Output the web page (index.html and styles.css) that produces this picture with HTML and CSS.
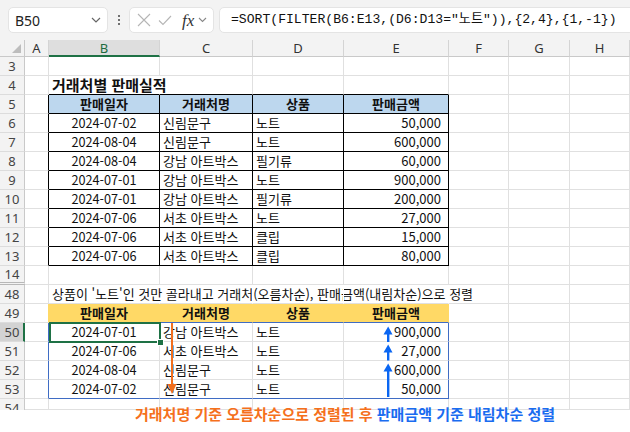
FILE: index.html
```html
<!DOCTYPE html>
<html lang="ko">
<head>
<meta charset="utf-8">
<link rel="stylesheet" href="styles.css">
</head>
<body>
<div class="toolbar">
  <div class="namebox"><span class="ref">B50</span>
    <svg class="chev" width="10" height="6" viewBox="0 0 10 6"><path d="M1 1 L5 5 L9 1" fill="none" stroke="#666" stroke-width="1.2"/></svg>
  </div>
  <div class="dots"><i></i><i></i><i></i></div>
  <div class="fxbox">
    <svg width="14" height="14" viewBox="0 0 14 14"><path d="M1 1 L13 13 M13 1 L1 13" stroke="#b5b5b5" stroke-width="1.1" fill="none"/></svg>
    <svg width="14" height="14" viewBox="0 0 14 14"><path d="M1 7.5 L5 11.5 L13 3" stroke="#b5b5b5" stroke-width="1.1" fill="none"/></svg>
    <span class="fx">fx</span>
    <svg width="9" height="6" viewBox="0 0 9 6"><path d="M1 1 L4.5 4.5 L8 1" fill="none" stroke="#888" stroke-width="1.1"/></svg>
  </div>
  <div class="formula">=SORT(FILTER(B6:E13,(D6:D13="노트")),{2,4},{1,-1})</div>
</div>

<div class="sheet">
  <div class="corner"><svg width="9" height="9" viewBox="0 0 9 9"><path d="M9 0 L9 9 L0 9 Z" fill="#bdbdbd"/></svg></div>
  <div class="h">A</div><div class="h hsel">B</div><div class="h">C</div><div class="h">D</div><div class="h">E</div><div class="h">F</div><div class="h">G</div><div class="h">H</div>

  <div class="rh">3</div><div class="c"></div><div class="c"></div><div class="c"></div><div class="c"></div><div class="c"></div><div class="c"></div><div class="c"></div><div class="c"></div>

  <div class="rh">4</div><div class="c"></div><div class="c nr tb title">거래처별 판매실적</div><div class="c tb"></div><div class="c tb"></div><div class="c tb"></div><div class="c"></div><div class="c"></div><div class="c"></div>

  <div class="rh">5</div><div class="c lb"></div><div class="c t hd">판매일자</div><div class="c t hd">거래처명</div><div class="c t hd">상품</div><div class="c t hd">판매금액</div><div class="c"></div><div class="c"></div><div class="c"></div>

  <div class="rh">6</div><div class="c lb"></div><div class="c t dt">2024-07-02</div><div class="c t kr">신림문구</div><div class="c t kr">노트</div><div class="c t num">50,000</div><div class="c"></div><div class="c"></div><div class="c"></div>
  <div class="rh">7</div><div class="c lb"></div><div class="c t dt">2024-08-04</div><div class="c t kr">신림문구</div><div class="c t kr">노트</div><div class="c t num">600,000</div><div class="c"></div><div class="c"></div><div class="c"></div>
  <div class="rh">8</div><div class="c lb"></div><div class="c t dt">2024-08-04</div><div class="c t kr">강남 아트박스</div><div class="c t kr">필기류</div><div class="c t num">60,000</div><div class="c"></div><div class="c"></div><div class="c"></div>
  <div class="rh">9</div><div class="c lb"></div><div class="c t dt">2024-07-01</div><div class="c t kr">강남 아트박스</div><div class="c t kr">노트</div><div class="c t num">900,000</div><div class="c"></div><div class="c"></div><div class="c"></div>
  <div class="rh">10</div><div class="c lb"></div><div class="c t dt">2024-07-01</div><div class="c t kr">강남 아트박스</div><div class="c t kr">필기류</div><div class="c t num">200,000</div><div class="c"></div><div class="c"></div><div class="c"></div>
  <div class="rh">11</div><div class="c lb"></div><div class="c t dt">2024-07-06</div><div class="c t kr">서초 아트박스</div><div class="c t kr">노트</div><div class="c t num">27,000</div><div class="c"></div><div class="c"></div><div class="c"></div>
  <div class="rh">12</div><div class="c lb"></div><div class="c t dt">2024-07-06</div><div class="c t kr">서초 아트박스</div><div class="c t kr">클립</div><div class="c t num">15,000</div><div class="c"></div><div class="c"></div><div class="c"></div>
  <div class="rh">13</div><div class="c lb"></div><div class="c t dt">2024-07-06</div><div class="c t kr">서초 아트박스</div><div class="c t kr">클립</div><div class="c t num">80,000</div><div class="c"></div><div class="c"></div><div class="c"></div>

  <div class="rh hidden-after">14</div><div class="c"></div><div class="c"></div><div class="c"></div><div class="c"></div><div class="c"></div><div class="c"></div><div class="c"></div><div class="c"></div>

  <div class="rh">48</div><div class="c"></div><div class="c nr note">상품이 '노트'인 것만 골라내고 거래처(오름차순), 판매금액(내림차순)으로 정렬</div><div class="c nr"></div><div class="c nr"></div><div class="c nr"></div><div class="c"></div><div class="c"></div><div class="c"></div>

  <div class="rh">49</div><div class="c ylb"></div><div class="c yl">판매일자</div><div class="c yl">거래처명</div><div class="c yl">상품</div><div class="c yl">판매금액</div><div class="c"></div><div class="c"></div><div class="c"></div>

  <div class="rh rsel">50</div><div class="c sl"></div><div class="c dt">2024-07-01</div><div class="c kr">강남 아트박스</div><div class="c kr">노트</div><div class="c sr num">900,000</div><div class="c"></div><div class="c"></div><div class="c"></div>
  <div class="rh">51</div><div class="c sl"></div><div class="c dt">2024-07-06</div><div class="c kr">서초 아트박스</div><div class="c kr">노트</div><div class="c sr num">27,000</div><div class="c"></div><div class="c"></div><div class="c"></div>
  <div class="rh">52</div><div class="c sl"></div><div class="c dt">2024-08-04</div><div class="c kr">신림문구</div><div class="c kr">노트</div><div class="c sr num">600,000</div><div class="c"></div><div class="c"></div><div class="c"></div>
  <div class="rh">53</div><div class="c sl"></div><div class="c sb dt">2024-07-02</div><div class="c sb kr">신림문구</div><div class="c sb kr">노트</div><div class="c sb sr num">50,000</div><div class="c"></div><div class="c"></div><div class="c"></div>

  <div class="rh last">54</div><div class="c"></div><div class="c"></div><div class="c"></div><div class="c"></div><div class="c"></div><div class="c"></div><div class="c"></div><div class="c"></div>

  <div class="selbox"></div>
  <div class="handle"></div>
  <svg class="arrows" width="630" height="370" viewBox="0 0 630 370">
    <rect x="171" y="283" width="2" height="63" fill="#f26f1e"/>
    <path d="M167.5 344 L176.5 344 L172 354 Z" fill="#f26f1e"/>
    <rect x="387" y="292" width="2.4" height="10" fill="#0a66f2"/>
    <path d="M383.5 294.5 L392.5 294.5 L388.2 286.5 Z" fill="#0a66f2"/>
    <rect x="387" y="310" width="2.4" height="10.5" fill="#0a66f2"/>
    <path d="M383.5 312.5 L392.5 312.5 L388.2 304.5 Z" fill="#0a66f2"/>
    <rect x="387" y="329" width="2.4" height="28" fill="#0a66f2"/>
    <path d="M383.5 331.5 L392.5 331.5 L388.2 323.5 Z" fill="#0a66f2"/>
  </svg>
</div>

<div class="annot"><span class="or">거래처명 기준 오름차순으로 정렬된 후</span> <span class="bl">판매금액 기준 내림차순 정렬</span></div>
</body>
</html>
```

FILE: styles.css
```css
* { box-sizing: border-box; margin: 0; padding: 0; }
html, body { width: 630px; height: 432px; overflow: hidden; background: #fff; }
body { font-family: "Noto Sans CJK KR", "Noto Sans", sans-serif; color: #111; }

.toolbar {
  height: 40px;
  background: #f3f3f3;
  display: flex;
  align-items: center;
  padding-left: 8px;
}
.toolbar > * { flex: none; }
.namebox {
  width: 100px; height: 26px;
  background: #fff;
  border: 1px solid #e4e4e4;
  border-radius: 5px;
  display: flex; align-items: center; justify-content: space-between;
  padding: 0 6px 0 6px;
}
.ref { font-family: "Noto Sans", sans-serif; font-size: 14px; color: #222; }
.dots { width: 21px; display: flex; flex-direction: column; align-items: center; gap: 2px; }
.dots i { display: block; width: 2px; height: 2px; background: #444; border-radius: 1px; }
.fxbox {
  width: 85px; height: 26px;
  background: #fff;
  border: 1px solid #e4e4e4;
  border-radius: 5px;
  display: flex; align-items: center;
  padding-left: 7px; gap: 7px;
}
.fx { font-family: "Liberation Serif", serif; font-style: italic; font-size: 17px; color: #333; margin-left: 3px; margin-right: -3px; line-height: 1; }
.formula {
  margin-left: 5px;
  width: 430px;
  height: 26px;
  background: #fff;
  border: 1px solid #e4e4e4;
  border-radius: 5px;
  padding-left: 11px;
  font-family: "Liberation Mono", "Noto Sans CJK KR", monospace;
  font-size: 13.1px;
  line-height: 24px;
  color: #111;
  white-space: nowrap;
  overflow: hidden;
}

.sheet {
  position: relative;
  display: grid;
  grid-template-columns: 25px 24px 111px 93px 91px 105px 60px 61px 60px;
  grid-template-rows: 17px repeat(18, 19px) 11px;
  height: 370px;
  overflow: hidden;
}
.corner {
  background: #f3f3f3;
  border-right: 1px solid #c9c9c9;
  border-bottom: 1px solid #c9c9c9;
  display: flex; align-items: flex-end; justify-content: flex-end;
  padding: 0 3px 3px 0;
}
.h {
  background: #f3f3f3;
  border-right: 1px solid #d4d4d4;
  border-bottom: 1px solid #c9c9c9;
  font-family: "Noto Sans", sans-serif;
  font-size: 13px; line-height: 16px;
  text-align: center; color: #333;
}
.h.hsel { background: #dedede; border-bottom: 2px solid #1e7145; color: #1e6b3f; }
.rh {
  background: #f3f3f3;
  border-right: 1px solid #c9c9c9;
  border-bottom: 1px solid #dcdcdc;
  font-family: "Noto Sans", sans-serif;
  font-size: 13px; line-height: 18px;
  text-align: center; color: #444;
}
.rh.hidden-after { border-bottom: 3px double #b8b8b8; line-height: 17px; }
.rh.rsel { background: #d3d3d3; border-right: 2px solid #1e7145; padding-left: 1px; }
.rh.last { overflow: hidden; border-bottom: none; }

.c {
  border-right: 1px solid #e0e0e0;
  border-bottom: 1px solid #e0e0e0;
  white-space: nowrap;
  line-height: 17px;
  font-size: 13px;
}
.c.nr { border-right-color: #fff; }
.c.tb { border-bottom-color: #000; }
.c.lb { border-right-color: #000; }
.c.t { border-right-color: #000; border-bottom-color: #000; }
.title { font-size: 15px; font-weight: 700; padding-left: 3px; line-height: 18px; }
.hd { background: #bdd7ee; font-weight: 700; text-align: center; }
.dt { font-size: 12.7px; text-align: center; }
.kr { padding-left: 3px; }
.num { font-size: 13px; text-align: right; padding-right: 7px; }
.note { padding-left: 3px; }
.ylb { border-right-color: #ffd966; }
.yl {
  background: #ffd966;
  border-right-color: #ffd966;
  border-bottom-color: #3f6cc4;
  font-weight: 700; text-align: center;
}
.sl { border-right-color: #3f6cc4; }
.sr { border-right-color: #3f6cc4; }
.sb { border-bottom-color: #3f6cc4; }

.selbox {
  position: absolute;
  left: 49px; top: 282px;
  width: 112px; height: 21px;
  border: 2px solid #1e7145;
}
.handle {
  position: absolute;
  left: 157px; top: 299px;
  width: 7px; height: 7px;
  background: #1e7145;
  border: 1px solid #fff;
}
.arrows { position: absolute; left: 0; top: 0; pointer-events: none; }

.annot {
  margin-top: -5px;
  height: 27px;
  background: linear-gradient(transparent 5px, #fff 5px);
  padding-left: 135px;
  font-size: 15px;
  font-weight: 700;
  line-height: 18px;
  white-space: nowrap;
  position: relative;
}
.or { color: #f5701c; }
.bl { color: #1a6cf0; }
```
